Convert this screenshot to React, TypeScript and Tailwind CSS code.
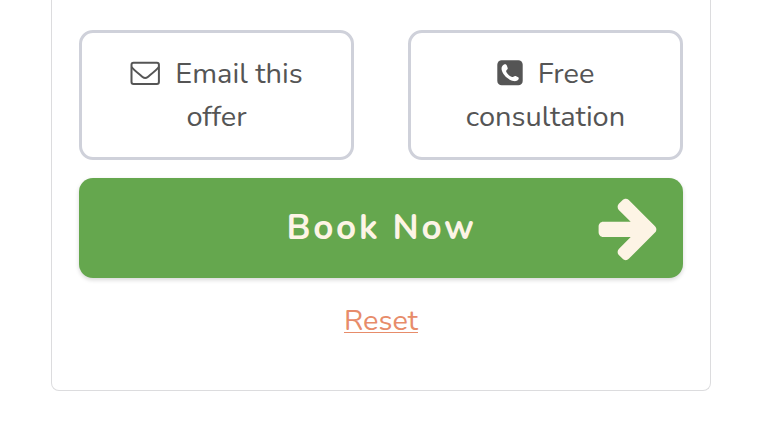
import type { ReactNode } from "react";

function EnvelopeIcon() {
  return (
    <svg viewBox="0 0 30 24" className="mr-[15px] inline-block h-[24px] w-[30px] align-[-2px]" fill="none" stroke="currentColor" strokeWidth="2">
      <rect x="1.5" y="1.8" width="27.4" height="21.2" rx="2" />
      <path d="M1.6 6C3.4 8.6 8.8 12.8 12.6 16C14.4 17.5 16 17.5 17.8 16C21.6 12.8 27 8.6 28.8 6" />
    </svg>
  );
}

function PhoneIcon() {
  return (
    <svg viewBox="0 0 26 26" className="mr-[15px] inline-block h-[26px] w-[26px] align-[-3px]">
      <rect x="0.3" y="0.3" width="25.4" height="25" rx="4.4" fill="currentColor" />
      <path
        d="M7 4.6C8.7 4 9.5 4.6 10 6L10.7 8.1C11.1 9.6 8.9 10 9.1 11.3C9.7 13.5 12.6 16.4 15 17C16.4 17.3 17.2 15.6 18.6 16L21.2 17.2C22 17.7 21.9 18.7 21.4 19.5C20.4 21 18.4 21.4 16.6 21.1C11.2 20.1 5.5 14.8 4.6 9.6C4.3 7.5 5.2 5.3 7 4.6Z"
        fill="white"
      />
    </svg>
  );
}

function ArrowIcon() {
  return (
    <svg viewBox="0 0 59 63" className="mt-[2px] h-[63px] w-[59px]" fill="currentColor">
      <path d="M5.2 23.8H32.7L20.8 11.9C19.2 10.3 19.2 7.4 20.8 5.8L24.4 2.2C26.4 .2 29 .2 30.8 2L57 28.2C58.8 30 58.8 32.8 57 34.6L30.8 60.8C29 62.6 26.4 62.6 24.4 60.6L20.8 57C19.2 55.4 19.2 52.5 20.8 50.9L32.7 39H5.2C2.4 39 .6 36.8 .6 34V28.8C.6 26 2.4 23.8 5.2 23.8Z" />
    </svg>
  );
}

function OutlineButton({ children }: { children: ReactNode }) {
  return (
    <button className="h-[130px] w-[275px] rounded-[14px] border-[3px] border-[#cfd1da] px-10 pb-px text-[29px] leading-[43px] text-[#555555]">
      {children}
    </button>
  );
}

export default function App() {
  return (
    <div className="h-[430px] w-[770px] overflow-hidden bg-white font-['Nunito','Open_Sans',sans-serif]">
      <div className="ml-[51px] h-[391px] w-[660px] rounded-b-lg border border-t-0 border-[#dcdcde] px-[27px] pt-[30px]">
        <div className="flex justify-between">
          <OutlineButton>
            <EnvelopeIcon />
            Email this
            <br />
            offer
          </OutlineButton>
          <OutlineButton>
            <PhoneIcon />
            Free
            <br />
            consultation
          </OutlineButton>
        </div>
        <button className="mt-[18px] grid h-[100px] w-full grid-cols-[59px_1fr_59px] items-center rounded-[14px] bg-[#65a74e] px-[26px] text-[#fdf4e5] shadow-[0_2px_4px_rgba(0,0,0,0.16)]">
          <span className="col-start-2 pl-px text-center text-[35px] leading-[48px] font-bold tracking-[2.7px]">Book Now</span>
          <ArrowIcon />
        </button>
        <div className="mt-[22px] text-center text-[29px] leading-[42px] text-[#e78c6a]">
          <a className="underline decoration-1 underline-offset-[2px]">Reset</a>
        </div>
      </div>
    </div>
  );
}
